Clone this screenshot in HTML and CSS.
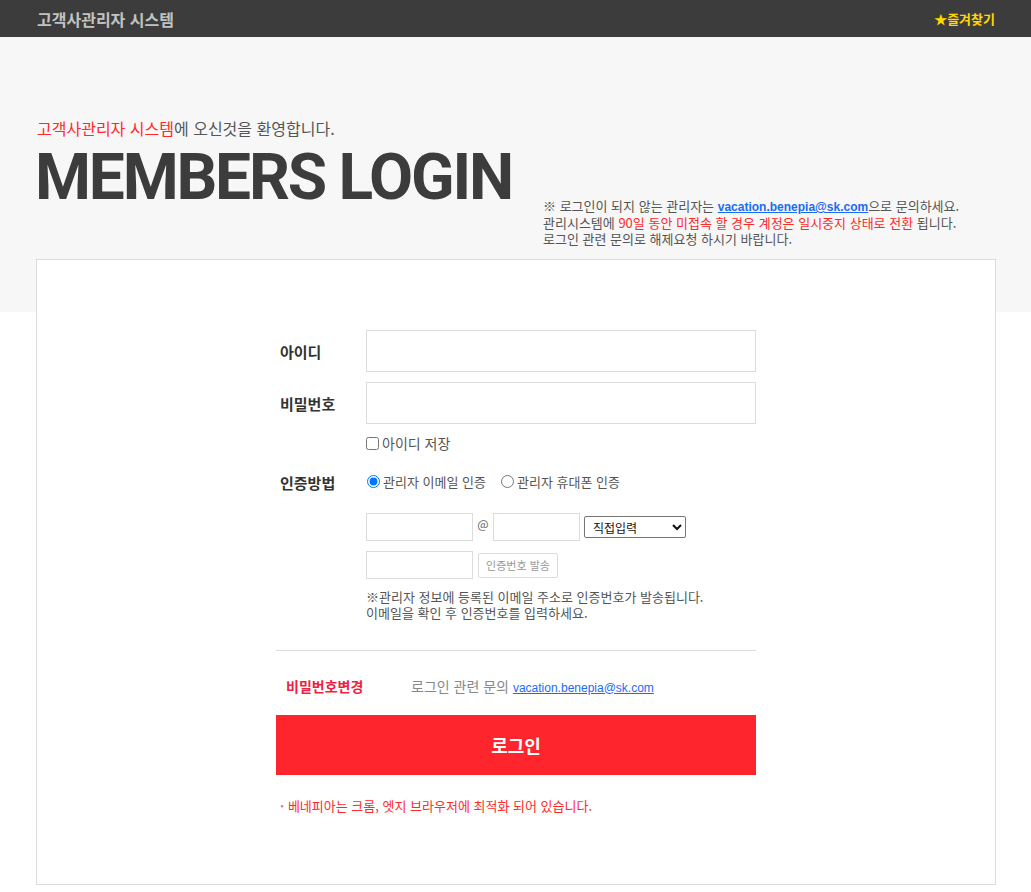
FILE: index.html
```html
<!DOCTYPE html>
<html lang="ko">
<head>
<meta charset="utf-8">
<title>고객사관리자 시스템</title>
<link rel="stylesheet" href="styles.css">
</head>
<body>
<header class="topbar">
  <div class="brand">고객사관리자 시스템</div>
  <a class="fav" href="#"><span class="star">★</span>즐겨찾기</a>
</header>
<main class="page">
  <section class="hero">
    <div class="hero-left">
      <p class="welcome"><span class="red">고객사관리자 시스템</span>에 오신것을 환영합니다.</p>
      <h1 class="title">MEMBERS LOGIN</h1>
    </div>
    <div class="hero-notice">
      <p>※ 로그인이 되지 않는 관리자는 <a class="mail-bold" href="#">vacation.benepia@sk.com</a>으로 문의하세요.</p>
      <p>관리시스템에 <span class="red">90일 동안 미접속 할 경우 계정은 일시중지 상태로 전환</span> 됩니다.</p>
      <p>로그인 관련 문의로 해제요청 하시기 바랍니다.</p>
    </div>
  </section>
  <section class="card">
    <form class="form">
      <div class="row">
        <label class="label">아이디</label>
        <input class="field" type="text">
      </div>
      <div class="row row-pw">
        <label class="label">비밀번호</label>
        <input class="field" type="password">
      </div>
      <div class="row row-save">
        <span class="label"></span>
        <label class="check"><input type="checkbox"> 아이디 저장</label>
      </div>
      <div class="row row-auth">
        <span class="label">인증방법</span>
        <div class="radios">
          <label class="radio"><input type="radio" name="auth" checked>관리자 이메일 인증</label>
          <label class="radio"><input type="radio" name="auth">관리자 휴대폰 인증</label>
        </div>
      </div>
      <div class="row row-email">
        <span class="label"></span>
        <div class="email">
          <input class="small w107" type="text">
          <span class="at">@</span>
          <input class="small w87" type="text">
          <select class="domain"><option>직접입력</option></select>
        </div>
      </div>
      <div class="row row-cert">
        <span class="label"></span>
        <div class="cert">
          <input class="small w107" type="text">
          <button type="button" class="send">인증번호 발송</button>
        </div>
      </div>
      <div class="row row-info">
        <span class="label"></span>
        <p class="info">※관리자 정보에 등록된 이메일 주소로 인증번호가 발송됩니다.<br>이메일을 확인 후 인증번호를 입력하세요.</p>
      </div>
      <hr class="divider">
      <div class="links">
        <a class="pwchange" href="#">비밀번호변경</a>
        <span class="contact">로그인 관련 문의 <a href="#">vacation.benepia@sk.com</a></span>
      </div>
      <button type="button" class="login">로그인</button>
      <p class="note"><span class="dot">·</span> 베네피아는 크롬, 엣지 브라우저에 최적화 되어 있습니다.</p>
    </form>
  </section>
</main>
</body>
</html>
```
FILE: styles.css
```css
* { box-sizing: border-box; }
html, body { margin: 0; padding: 0; }
body {
  font-family: "Noto Sans CJK KR", "Noto Sans", sans-serif;
  color: #555;
  background: #fff;
  width: 1031px;
}
p { margin: 0; }
a { text-decoration: none; }
.red { color: #ff2a2a; }

.topbar {
  height: 37px;
  background: #3c3c3c;
  display: flex;
  align-items: center;
  justify-content: space-between;
  padding: 0 36px 0 37px;
}
.brand {
  color: #c2c2c2;
  font-size: 16px;
  font-weight: 700;
  line-height: 22px;
}
.fav {
  color: #ffd800;
  font-size: 13px;
  font-weight: 700;
  line-height: 20px;
}
.star { font-size: 13px; }

.page {
  background: linear-gradient(#f7f7f7 0, #f7f7f7 275px, #fff 275px);
  padding-bottom: 7px;
}
.hero {
  display: flex;
  align-items: flex-start;
  padding: 80px 0 12px 35px;
}
.hero-left { width: 508px; }
.welcome {
  font-size: 16px;
  line-height: 22px;
  color: #555;
  padding-left: 2px;
}
.title {
  margin: 6px 0 0;
  font-family: Roboto, "Liberation Sans", sans-serif;
  font-weight: 700;
  font-size: 64px;
  line-height: 66px;
  letter-spacing: -2.2px;
  color: #3c3c3c;
}
.hero-notice {
  margin-top: 81px;
  font-size: 13px;
  line-height: 16px;
  color: #555;
}
.mail-bold {
  font-family: "Liberation Sans", sans-serif;
  font-size: 12px;
  color: #1a6cf5;
  font-weight: 700;
  text-decoration: underline;
}

.card {
  width: 960px;
  margin-left: 36px;
  background: #fff;
  border: 1px solid #dcdcdc;
  padding: 70px 0 69px;
}
.form {
  width: 480px;
  margin: 0 auto;
}
.row {
  display: flex;
  align-items: center;
  margin: 0;
}
.label {
  width: 90px;
  flex: none;
  padding-left: 4px;
  font-size: 15px;
  font-weight: 700;
  color: #333;
}
.field {
  width: 390px;
  height: 42px;
  border: 1px solid #dcdcdc;
  background: #fff;
  margin: 0;
}
.row-pw { margin-top: 10px; }
.row-save { margin-top: 10px; height: 18px; }
.check {
  display: flex;
  align-items: center;
  font-size: 14px;
  color: #555;
  line-height: 18px;
}
.check input { margin: 0 3px 0 0; width: 13px; height: 13px; }
.row-auth { margin-top: 13px; height: 34px; }
.radios { display: flex; gap: 14px; }
.radio {
  display: flex;
  align-items: center;
  font-size: 13px;
  color: #555;
  line-height: 16px;
}
.radio input { margin: 0 3px 2px 1px; width: 13px; height: 13px; }
.row-email { margin-top: 14px; }
.email, .cert { display: flex; align-items: center; }
.small {
  height: 28px;
  border: 1px solid #dcdcdc;
  background: #fff;
  margin: 0;
}
.w107 { width: 107px; }
.w87 { width: 87px; }
.at {
  width: 20px;
  text-align: center;
  font-size: 12px;
  color: #666;
  align-self: flex-start;
  line-height: 22px;
}
.domain {
  margin-left: 4px;
  width: 102px;
  height: 22px;
  font-size: 12px;
  font-family: "Noto Sans CJK KR", sans-serif;
  color: #111;
  border: 1px solid #767676;
  border-radius: 2px;
  background: #fff;
  padding: 0 4px;
}
.row-cert { margin-top: 10px; }
.send {
  margin-left: 5px;
  width: 80px;
  height: 25px;
  border: 1px solid #dcdcdc;
  border-radius: 2px;
  background: #fff;
  color: #999;
  font-size: 11px;
  font-family: "Noto Sans CJK KR", sans-serif;
  padding: 0;
}
.row-info { margin-top: 10px; }
.info {
  font-size: 13px;
  line-height: 16px;
  color: #555;
}
.divider {
  border: 0;
  border-top: 1px solid #dcdcdc;
  margin: 29px 0 0;
}
.links {
  display: flex;
  align-items: center;
  height: 64px;
  padding-top: 5px;
  font-size: 13px;
}
.pwchange {
  color: #ee1f3f;
  font-weight: 700;
  font-size: 14px;
  padding-left: 10px;
  width: 135px;
}
.contact { color: #888; font-size: 14px; }
.contact a {
  font-family: "Liberation Sans", sans-serif;
  font-size: 12px;
  color: #1a6cf5;
  text-decoration: underline;
}
.login {
  display: block;
  width: 480px;
  height: 60px;
  border: 0;
  background: #ff252d;
  color: #fff;
  font-size: 18px;
  font-weight: 700;
  font-family: "Noto Sans CJK KR", sans-serif;
  margin: 0;
  padding: 0;
}
.note {
  margin-top: 22px;
  font-size: 13px;
  line-height: 18px;
  color: #ff2a2a;
  padding-left: 4px;
}
.dot { color: #ff6a8a; font-weight: 700; }
```
